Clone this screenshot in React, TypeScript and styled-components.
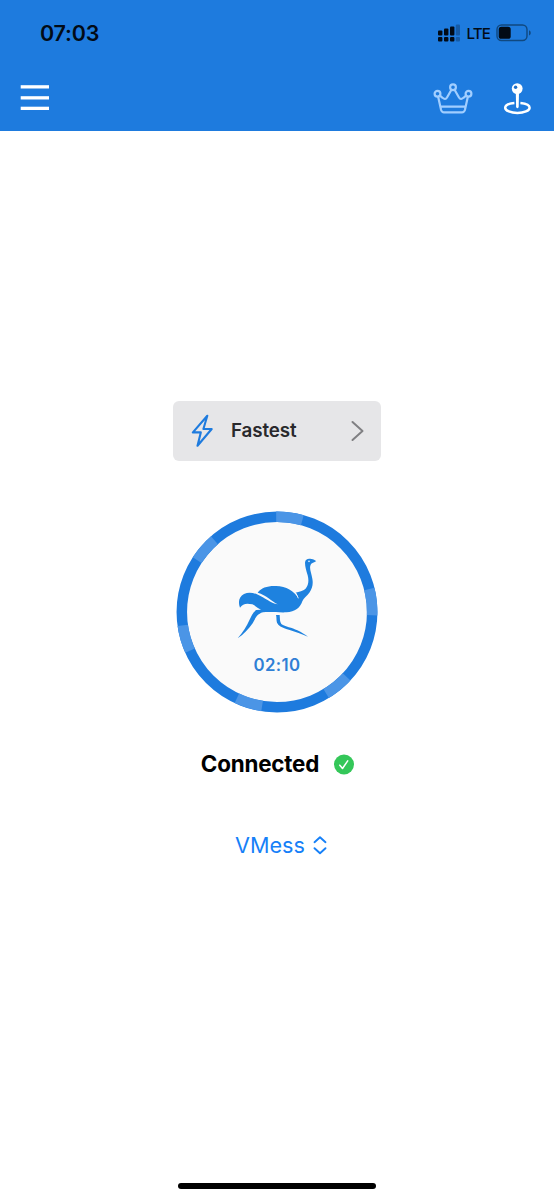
import React from "react";
import styled, { createGlobalStyle } from "styled-components";

const GlobalStyle = createGlobalStyle`
  * { box-sizing: border-box; }
  body { margin: 0; background: #fff; font-family: Inter, "Liberation Sans", sans-serif; }
  svg { display: block; flex: none; }
`;

const Screen = styled.main`
  width: 554px;
  height: 1200px;
  display: flex;
  flex-direction: column;
  align-items: center;
  background: #fff;
  overflow: hidden;
`;

const Header = styled.header`
  width: 100%;
  height: 131px;
  background: #1e7bde;
`;

const StatusBar = styled.div`
  height: 66px;
  padding: 0 22px 0 40px;
  display: flex;
  align-items: center;
  justify-content: space-between;
  color: #020b16;
`;

const Label = styled.span<{ $size: number; $weight: number; $color?: string; $spacing?: number }>`
  font-size: ${(p) => p.$size}px;
  font-weight: ${(p) => p.$weight};
  color: ${(p) => p.$color ?? "#020b16"};
  letter-spacing: ${(p) => p.$spacing ?? 0}px;
  line-height: 28px;
  white-space: nowrap;
`;

const StatusIcons = styled.div`
  display: flex;
  align-items: center;
  gap: 6px;
`;

const Carrier = styled.div`
  display: flex;
  padding-top: 2px;
`;

const NavBar = styled.nav`
  height: 65px;
  padding: 0 21px 0 20px;
  display: flex;
  align-items: center;
  justify-content: space-between;
`;

const IconButton = styled.button`
  padding: 0;
  border: 0;
  background: none;
`;

const Actions = styled.div`
  display: flex;
  align-items: center;
  gap: 30px;
`;

const ServerButton = styled.button`
  margin-top: 270px;
  width: 208px;
  height: 60px;
  padding: 0 16px 0 18px;
  display: flex;
  align-items: center;
  border: 0;
  border-radius: 6px;
  background: #e6e6e8;
  font-family: inherit;
`;

const ServerName = styled.span`
  flex: 1;
  padding-left: 18px;
  display: flex;
`;

const Dial = styled.section`
  margin-top: 50px;
  width: 202px;
  height: 202px;
  display: grid;
  justify-items: center;
`;

const DialRing = styled.svg`
  grid-area: 1 / 1;
`;

const DialContent = styled.div`
  grid-area: 1 / 1;
  padding-top: 34px;
  display: flex;
  flex-direction: column;
  align-items: center;
`;

const Timer = styled.div`
  margin-top: 6px;
  display: flex;
`;

const ConnectionState = styled.div`
  margin: 37px 0 0 2px;
  display: flex;
  align-items: center;
  gap: 14px;
`;

const ProtocolButton = styled.button`
  margin: 53px 0 0 8px;
  padding: 0;
  display: flex;
  align-items: center;
  gap: 8px;
  border: 0;
  background: none;
  font-family: inherit;
`;

const HomeIndicator = styled.div`
  margin: auto 0 11px;
  width: 198px;
  height: 6px;
  border-radius: 3px;
  background: #000;
`;

const segmentStarts = [-0.5, 76, 133, 189, 246, 303];

const Signal = () => (
  <svg width="22" height="18" viewBox="0 0 22 18" fill="#020b16">
    <rect x="0" y="6.4" width="4.4" height="5.2" rx="1" />
    <rect x="6" y="4.4" width="4.4" height="7.2" rx="1" />
    <rect x="12" y="2.4" width="4.4" height="9.2" rx="1" />
    <rect x="17.8" y=".6" width="4.2" height="11" rx="1" opacity=".28" />
    <rect x="0" y="13" width="4.4" height="4.5" rx="1" />
    <rect x="6" y="13" width="4.4" height="4.5" rx="1" />
    <rect x="12" y="13" width="4.4" height="4.5" rx="1" />
    <rect x="17.8" y="13" width="4.2" height="4.5" rx="1" opacity=".28" />
  </svg>
);

const Battery = () => (
  <svg width="36" height="18" viewBox="0 0 36 18">
    <rect x="1" y="1" width="30" height="15.5" rx="4.5" fill="none" stroke="#10487f" strokeWidth="1.4" />
    <rect x="2.7" y="2.8" width="12" height="12" rx="2.6" fill="#020b16" />
    <path d="M33 6.2c2.3 1 2.3 4.3 0 5.3z" fill="#10487f" />
  </svg>
);

const Menu = () => (
  <svg width="30" height="30" viewBox="0 0 30 30" fill="#fff">
    <rect x=".7" y="1.2" width="28.3" height="3.3" />
    <rect x=".7" y="12.2" width="28.3" height="3.3" />
    <rect x=".7" y="22.7" width="28.3" height="3.3" />
  </svg>
);

const Crown = () => (
  <svg width="40" height="34" viewBox="0 0 40 34" fill="none" stroke="#a1ceff" strokeWidth="2.2" strokeLinejoin="round" strokeLinecap="round">
    <circle cx="20" cy="5.3" r="2.9" />
    <circle cx="4.5" cy="11.8" r="2.9" />
    <circle cx="35.5" cy="11.8" r="2.9" />
    <path d="M18.3 8 L14 15.5 Q12.2 18.2 9.6 15.8 L6.9 13.7 M21.7 8 L26 15.5 Q27.8 18.2 30.4 15.8 L33.1 13.7 M5.2 14.9 L8.1 28 Q8.8 30.3 11 30.3 H29 Q31.2 30.3 31.9 28 L34.8 14.9 M7.8 24.7 H32.2" />
  </svg>
);

const Pin = () => (
  <svg width="30" height="34" viewBox="0 0 30 34">
    <path d="M11.4 21C5.4 21.5 2.2 23.3 2.2 25.7c0 3 5.7 5.2 12.2 5.2s12.2-2.2 12.2-5.2c0-2.4-3.2-4.2-9.2-4.7" fill="none" stroke="#fff" strokeWidth="2.5" />
    <path d="M12.8 10h3.2l-.3 15q-1.3 2.6-2.6 0z" fill="#fff" />
    <circle cx="14.2" cy="6.6" r="5.4" fill="#fff" />
    <circle cx="12.6" cy="5.3" r="1.7" fill="#1e6fc8" />
  </svg>
);

const Bolt = () => (
  <svg width="22" height="34" viewBox="0 0 22 34" fill="none" stroke="#1e7bde" strokeWidth="2.1" strokeLinejoin="round">
    <path d="M16.3 1.8 1.9 18.4h7.9L6.5 31.8 20.7 15h-8.3z" />
  </svg>
);

const Ostrich = () => (
  <svg width="104" height="100" viewBox="0 0 312 300" fill="#1e82df">
    <path d="M98 143 C109 128 128 122 153 123 C184 124 207 138 220 159 C217 149 214 144 211 143 C223 140 234 138 241 132 C251 122 252 106 248 91 C244 76 240 66 240 53 C241 43 248 40 259 42 C266 42 269 46 274 48 C268 52 259 54 257 59 C252 70 259 84 262 101 C265 117 262 131 253 143 C246 153 236 158 232 169 C226 188 210 201 184 202 C157 203 134 199 114 202 C95 207 91 221 83 235 C71 253 55 269 38 280 C54 261 65 245 73 226 C79 214 83 201 94 195 L108 194 C99 190 92 182 82 178 C66 174 53 175 45 188 C38 170 43 154 57 147 C70 141 84 143 99 149 C119 158 136 173 158 178 C142 170 124 150 98 143Z" />
    <path d="M153 210h11c1 11 0 20 5 27 12 8 32 11 48 19 13 6 23 13 32 19-20-9-37-14-55-20-14-5-27-8-34-16-8-8-4-19-7-29z" />
    <path d="M211 142 Q216 150 220 160" fill="none" stroke="#fafafa" strokeWidth="2.5" />
    <circle cx="252" cy="49" r="2.5" fill="#fafafa" />
  </svg>
);

export default function App() {
  return (
    <>
      <GlobalStyle />
      <Screen>
        <Header>
          <StatusBar>
            <Label $size={21.5} $weight={600} $spacing={-0.2}>07:03</Label>
            <StatusIcons>
              <Signal />
              <Carrier>
                <Label $size={15.2} $weight={500} $spacing={-0.9}>LTE</Label>
              </Carrier>
              <Battery />
            </StatusIcons>
          </StatusBar>
          <NavBar>
            <IconButton aria-label="Menu"><Menu /></IconButton>
            <Actions>
              <IconButton aria-label="Premium"><Crown /></IconButton>
              <IconButton aria-label="Location"><Pin /></IconButton>
            </Actions>
          </NavBar>
        </Header>
        <ServerButton>
          <Bolt />
          <ServerName>
            <Label $size={18.8} $weight={600} $color="#29292c" $spacing={-0.1}>Fastest</Label>
          </ServerName>
          <svg width="14" height="22" viewBox="0 0 14 22" fill="none" stroke="#808083" strokeWidth="2" strokeLinecap="round" strokeLinejoin="round">
            <path d="m1.5 2 10 9-10 9" />
          </svg>
        </ServerButton>
        <Dial>
          <DialRing width="202" height="202" viewBox="0 0 202 202" fill="none" strokeWidth="10.5">
            <circle cx="101" cy="101" r="95.2" fill="#fafafa" stroke="#1e7bde" />
            {segmentStarts.map((start) => (
              <circle
                key={start}
                cx="101"
                cy="101"
                r="95.2"
                stroke="#4b95e6"
                pathLength={360}
                strokeDasharray="16 344"
                transform={`rotate(${start - 90} 101 101)`}
              />
            ))}
          </DialRing>
          <DialContent>
            <Ostrich />
            <Timer>
              <Label $size={16.8} $weight={600} $color="#2f7fd5" $spacing={0.4}>02:10</Label>
            </Timer>
          </DialContent>
        </Dial>
        <ConnectionState>
          <Label $size={22.4} $weight={700} $color="#000" $spacing={-0.2}>Connected</Label>
          <svg width="22" height="22" viewBox="0 0 22 22">
            <circle cx="11" cy="11.5" r="10" fill="#34c759" />
            <path d="m6.8 12.2 2.7 3.3 5.2-7.7" fill="none" stroke="#fff" strokeWidth="1.5" strokeLinecap="round" strokeLinejoin="round" />
          </svg>
        </ConnectionState>
        <ProtocolButton>
          <Label $size={21.6} $weight={400} $color="#1680f8">VMess</Label>
          <svg width="14" height="20" viewBox="0 0 14 20" fill="none" stroke="#1680f8" strokeWidth="1.9" strokeLinecap="round" strokeLinejoin="round">
            <path d="m1.5 7.2 5.5-5 5.5 5M1.5 13.2l5.5 5 5.5-5" />
          </svg>
        </ProtocolButton>
        <HomeIndicator />
      </Screen>
    </>
  );
}
